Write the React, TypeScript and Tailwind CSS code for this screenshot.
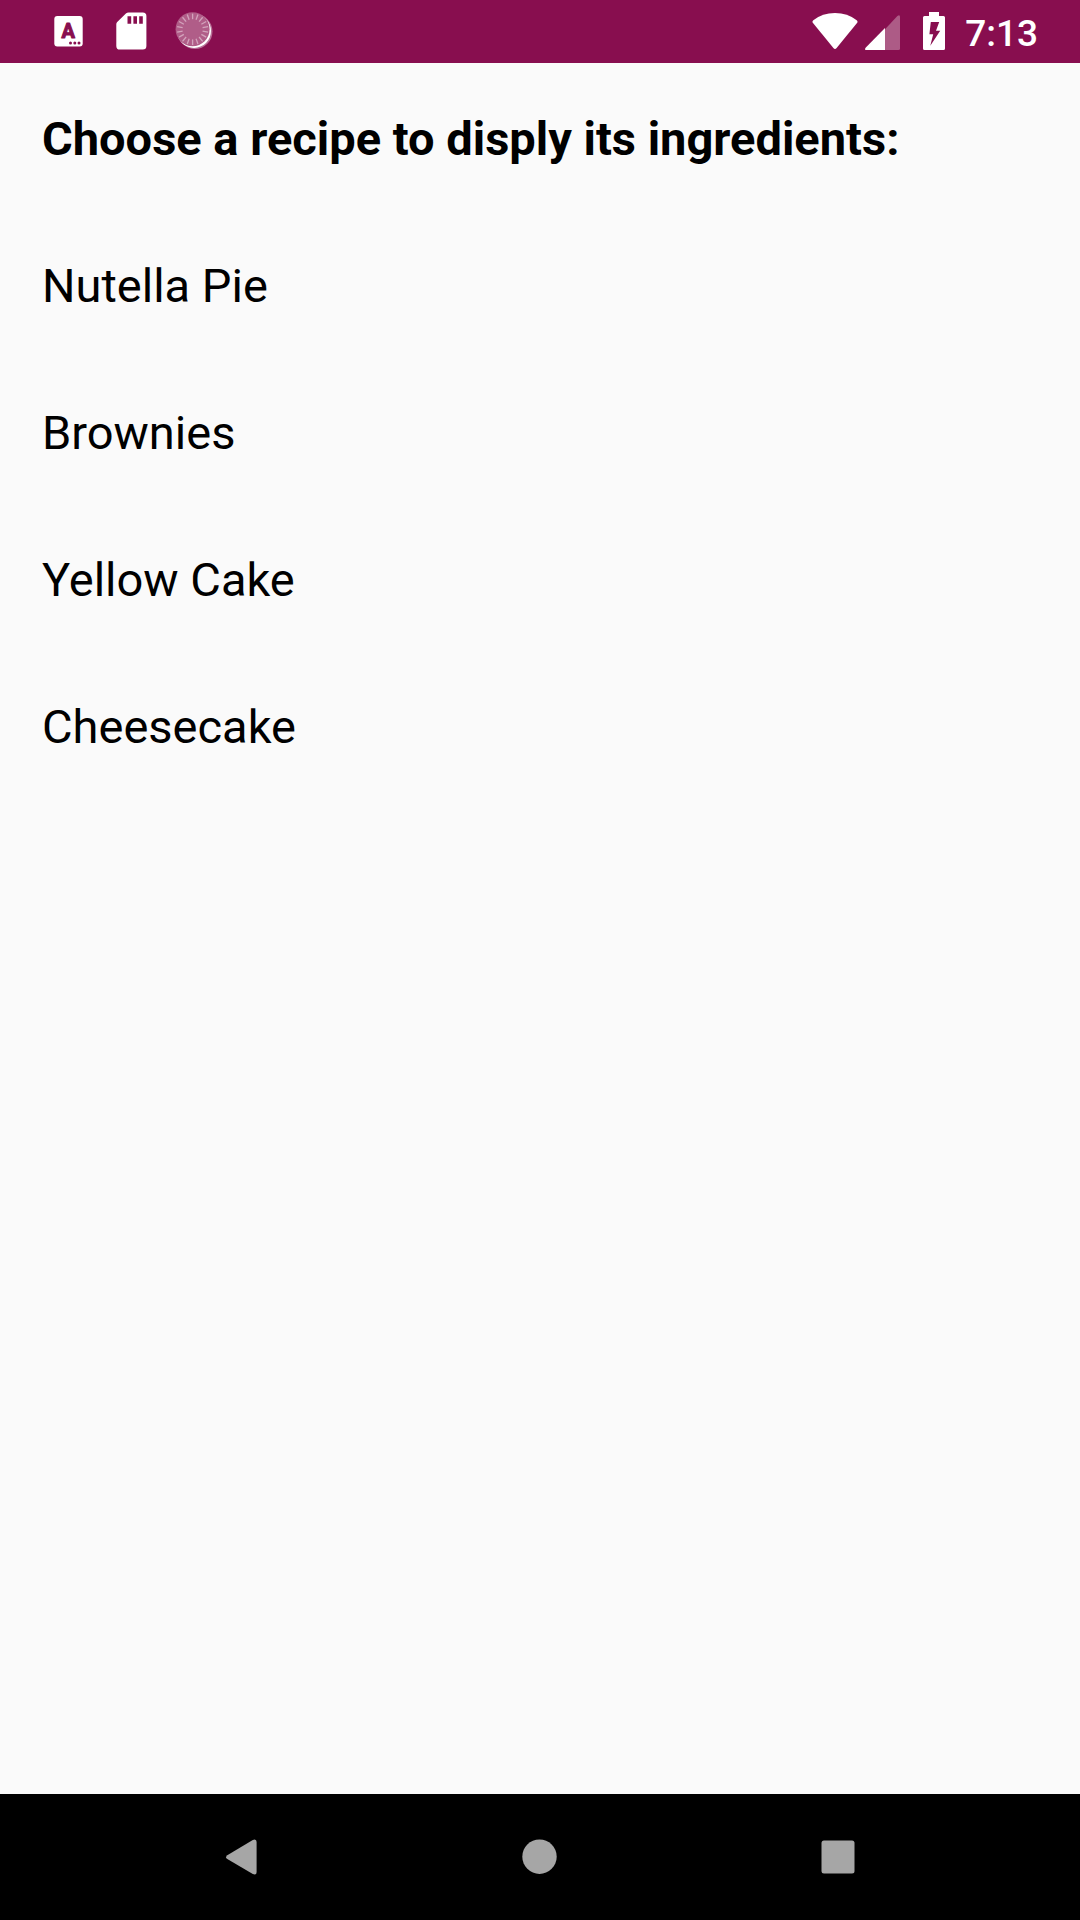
const recipes = ["Nutella Pie", "Brownies", "Yellow Cake", "Cheesecake"];

function KeyboardIcon() {
  return (
    <svg width="29" height="32" viewBox="0 0 29 32" aria-hidden="true">
      <rect x="0.3" y="1" width="28.4" height="30.4" rx="3" fill="#fff" />
      <text
        x="14.3"
        y="22.8"
        textAnchor="middle"
        fontFamily="Roboto, sans-serif"
        fontWeight="700"
        fontSize="20"
        fill="#880e4f"
        stroke="#880e4f"
        strokeWidth="1"
        strokeLinejoin="round"
      >
        A
      </text>
      <circle cx="16.5" cy="28" r="1.5" fill="#880e4f" />
      <circle cx="20.8" cy="28" r="1.5" fill="#880e4f" />
      <circle cx="25" cy="28" r="1.5" fill="#880e4f" />
    </svg>
  );
}

function SdCardIcon() {
  return (
    <svg width="31" height="38" viewBox="0 0 31 38" aria-hidden="true">
      <path
        fill="#fff"
        fillRule="evenodd"
        d="M12.6 0.4H26.8A3.6 3.6 0 0 1 30.4 4V34A3.6 3.6 0 0 1 26.8 37.6H4A3.6 3.6 0 0 1 0.3 34V12.3Q0.3 11 1.2 10.1L9.9 1.5Q11 0.4 12.6 0.4ZM11.5 4.2V11.8H15.2V4.2ZM17.4 4.2V11.8H21V4.2ZM23.2 4.2V11.8H26.8V4.2Z"
      />
    </svg>
  );
}

const ticks = Array.from({ length: 18 }, (_, i) => i * 20);

function SpinnerIcon() {
  return (
    <svg width="38" height="38" viewBox="0 0 38 38" aria-hidden="true">
      <circle cx="20" cy="19.5" r="17.5" fill="#b87097" />
      <circle cx="19" cy="18.9" r="17" fill="#fff" />
      <circle cx="17.6" cy="17.3" r="17" fill="#b05d88" />
      {ticks.map((angle) => (
        <line
          key={angle}
          x1="17.6"
          y1="1.6"
          x2="17.6"
          y2="7.2"
          stroke="#d3a3bc"
          strokeWidth="1.3"
          transform={`rotate(${angle} 17.6 17.3)`}
        />
      ))}
    </svg>
  );
}

function WifiIcon() {
  return (
    <svg width="46" height="38" viewBox="0 0 46 38" aria-hidden="true">
      <path
        fill="#fff"
        d="M1.3 8.2Q10.5 1 23 1T44.7 8.2Q46.2 9.4 45 11L24.6 36Q23 37.8 21.4 36L1 11Q-0.2 9.4 1.3 8.2Z"
      />
    </svg>
  );
}

function SignalIcon() {
  return (
    <svg width="35" height="38" viewBox="0 0 35 38" aria-hidden="true">
      <path fill="#ad5b86" d="M20 17.2L32.4 3.9Q35 2 35 4.9V36.5Q35 38 33.5 38H20Z" />
      <path fill="#fff" d="M20 16V38H1.4Q-0.8 38 0.6 35.7Z" />
    </svg>
  );
}

function BatteryIcon() {
  return (
    <svg width="22" height="38" viewBox="0 0 22 38" aria-hidden="true">
      <path
        fill="#fff"
        fillRule="evenodd"
        d="M6 0H16V4H20.5Q22 4 22 5.5V36.5Q22 38 20.5 38H1.5Q0 38 0 36.5V5.5Q0 4 1.5 4H6ZM7.8 10L6.4 22.3H10.2L7.3 33.8L17.2 18.8H13L16.2 10Z"
      />
    </svg>
  );
}

export default function App() {
  return (
    <div className="flex min-h-screen flex-col bg-[#fafafa] font-['Roboto',sans-serif] text-black">
      <header className="flex h-[63px] items-center justify-between bg-[#880e4f] pr-[42px] pb-px pl-[54px]">
        <div className="flex items-center">
          <KeyboardIcon />
          <div className="ml-[33px]">
            <SdCardIcon />
          </div>
          <div className="ml-7">
            <SpinnerIcon />
          </div>
        </div>
        <div className="flex items-center text-white">
          <WifiIcon />
          <div className="ml-[7px]">
            <SignalIcon />
          </div>
          <div className="ml-[23px]">
            <BatteryIcon />
          </div>
          <time className="ml-5 pt-1 text-[37px] leading-none font-medium">7:13</time>
        </div>
      </header>

      <main className="flex-1 pt-0.5">
        <h1 className="px-[42px] py-[42px] text-[47px] leading-[63px] font-bold">
          Choose a recipe to disply its ingredients:
        </h1>
        <ul>
          {recipes.map((recipe) => (
            <li key={recipe}>
              <button type="button" className="w-full px-[42px] py-[42px] text-left text-[47px] leading-[63px]">
                {recipe}
              </button>
            </li>
          ))}
        </ul>
      </main>

      <nav aria-label="System" className="flex h-[126px] bg-black px-[93px]">
        <button type="button" aria-label="Back" className="flex flex-1 items-center justify-center">
          <svg width="36" height="36" viewBox="0 0 36 36" aria-hidden="true">
            <path
              fill="#a6a6a6"
              d="M3.3 16.2L28.8 0.9Q32.6 -0.5 32.6 3V33Q32.6 36.5 28.8 35.1L3.3 20.1Q0.9 18.2 3.3 16.2Z"
            />
          </svg>
        </button>
        <button type="button" aria-label="Home" className="flex flex-1 items-center justify-center">
          <svg width="36" height="36" viewBox="0 0 36 36" aria-hidden="true">
            <circle cx="17.5" cy="17.7" r="17.2" fill="#a6a6a6" />
          </svg>
        </button>
        <button type="button" aria-label="Recent apps" className="flex flex-1 items-center justify-center">
          <svg width="36" height="36" viewBox="0 0 36 36" aria-hidden="true">
            <rect x="1.5" y="1.5" width="33" height="33" rx="2.5" fill="#a6a6a6" />
          </svg>
        </button>
      </nav>
    </div>
  );
}
